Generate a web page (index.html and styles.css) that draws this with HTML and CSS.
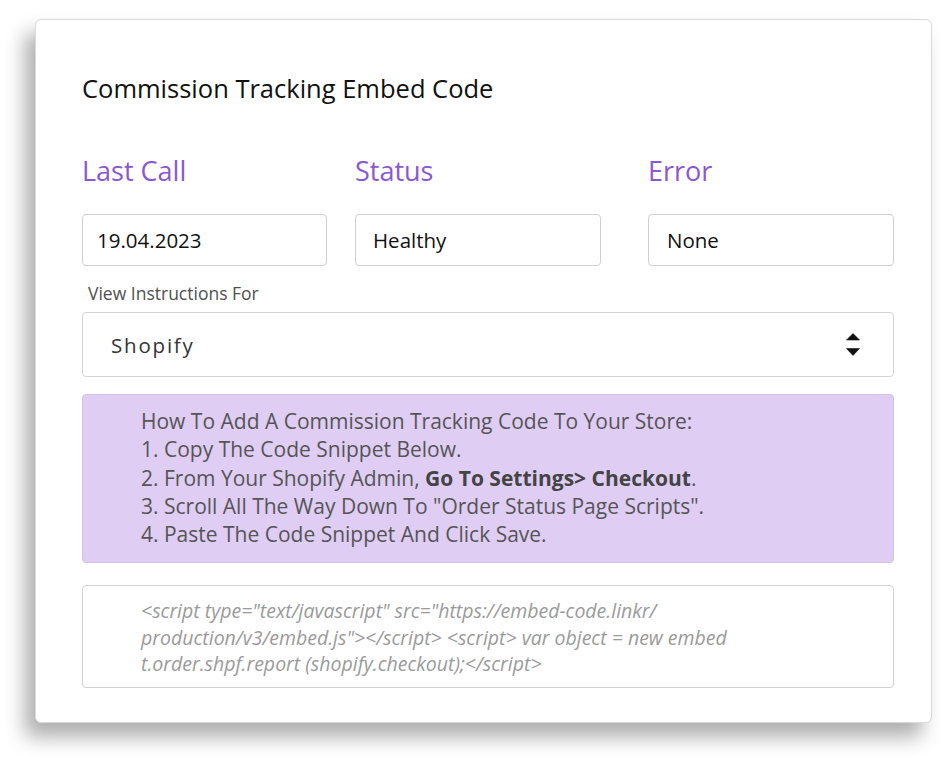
FILE: index.html
```html
<!DOCTYPE html>
<html lang="en">
<head>
<meta charset="utf-8">
<title>Commission Tracking Embed Code</title>
<link rel="stylesheet" href="styles.css">
</head>
<body>
<div class="card">
  <h1 class="title">Commission Tracking Embed Code</h1>
  <div class="stats">
    <div class="stat stat-1">
      <div class="stat-label">Last Call</div>
      <div class="field">19.04.2023</div>
    </div>
    <div class="stat stat-2">
      <div class="stat-label">Status</div>
      <div class="field">Healthy</div>
    </div>
    <div class="stat stat-3">
      <div class="stat-label">Error</div>
      <div class="field">None</div>
    </div>
  </div>
  <div class="select-label">View Instructions For</div>
  <div class="select">
    <span class="select-value">Shopify</span>
    <svg class="select-arrows" width="14" height="24" viewBox="0 0 14 24" aria-hidden="true">
      <path d="M7 0.5 L13.5 7 L0.5 7 Z" fill="#111" stroke="#111" stroke-width="0.6" stroke-linejoin="round"/>
      <path d="M0.5 15.5 L13.5 15.5 L7 22.5 Z" fill="#111" stroke="#111" stroke-width="0.6" stroke-linejoin="round"/>
    </svg>
  </div>
  <div class="instructions">
    <div>How To Add A Commission Tracking Code To Your Store:</div>
    <div>1. Copy The Code Snippet Below.</div>
    <div>2. From Your Shopify Admin, <b>Go To Settings&gt; Checkout</b>.</div>
    <div>3. Scroll All The Way Down To "Order Status Page Scripts".</div>
    <div>4. Paste The Code Snippet And Click Save.</div>
  </div>
  <div class="code">&lt;script type="text/javascript" src="https://embed-code.linkr/<br>production/v3/embed.js"&gt;&lt;/script&gt; &lt;script&gt; var object = new embed<br>t.order.shpf.report (shopify.checkout);&lt;/script&gt;</div>
</div>
</body>
</html>
```
FILE: styles.css
```css
html, body {
  margin: 0;
  padding: 0;
  background: #ffffff;
}
body {
  box-sizing: border-box;
  min-height: 757px;
  font-family: "Open Sans", "Noto Sans", sans-serif;
  padding: 19px 18px 0 35px;
}
.card {
  box-sizing: border-box;
  width: 897px;
  height: 704px;
  background: #fff;
  border: 1px solid #d9d9d9;
  border-radius: 6px;
  box-shadow: -10px 14px 20px rgba(0, 0, 0, 0.32);
  padding: 52px 37px 0 46px;
  display: flex;
  flex-direction: column;
}
.title {
  margin: 0;
  font-size: 25.5px;
  line-height: 32px;
  font-weight: 400;
  color: #111;
}
.stats {
  display: flex;
  margin-top: 49px;
}
.stat-1 { width: 245px; }
.stat-2 { width: 246px; margin-left: 28px; }
.stat-3 { width: 246px; margin-left: 47px; }
.stat-label {
  font-size: 27px;
  line-height: 36px;
  color: #8a57d6;
}
.field {
  box-sizing: border-box;
  margin-top: 25px;
  height: 52px;
  border: 1px solid #cfcfcf;
  border-radius: 4px;
  padding-left: 14px;
  display: flex;
  align-items: center;
  font-size: 20.5px;
  color: #111;
}
.stat-2 .field { padding-left: 17px; }
.stat-3 .field { padding-left: 18px; }
.select-label {
  margin-top: 16px;
  padding-left: 6px;
  font-size: 17.5px;
  line-height: 22px;
  font-weight: 500;
  color: #505050;
}
.select {
  box-sizing: border-box;
  margin-top: 8px;
  height: 65px;
  border: 1px solid #d4d4d4;
  border-radius: 4px;
  padding: 0 33px 0 28px;
  display: flex;
  align-items: center;
  justify-content: space-between;
}
.select-value {
  font-size: 20.5px;
  letter-spacing: 1.8px;
  color: #333;
}
.select-arrows {
  display: block;
  margin-top: 1px;
}
.instructions {
  box-sizing: border-box;
  margin-top: 17px;
  height: 169px;
  background: #dfcdf4;
  border: 1px solid #d2c2e8;
  border-radius: 4px;
  padding: 12px 20px 0 58px;
  font-size: 21px;
  line-height: 28.3px;
  color: #555;
}
.instructions b {
  font-weight: 700;
  color: #444;
}
.code {
  box-sizing: border-box;
  margin-top: 22px;
  height: 103px;
  border: 1px solid #d0d0d0;
  border-radius: 4px;
  padding: 12px 20px 0 58px;
  font-size: 19.5px;
  line-height: 26.5px;
  font-style: italic;
  color: #9a9a9a;
  white-space: nowrap;
}
```
